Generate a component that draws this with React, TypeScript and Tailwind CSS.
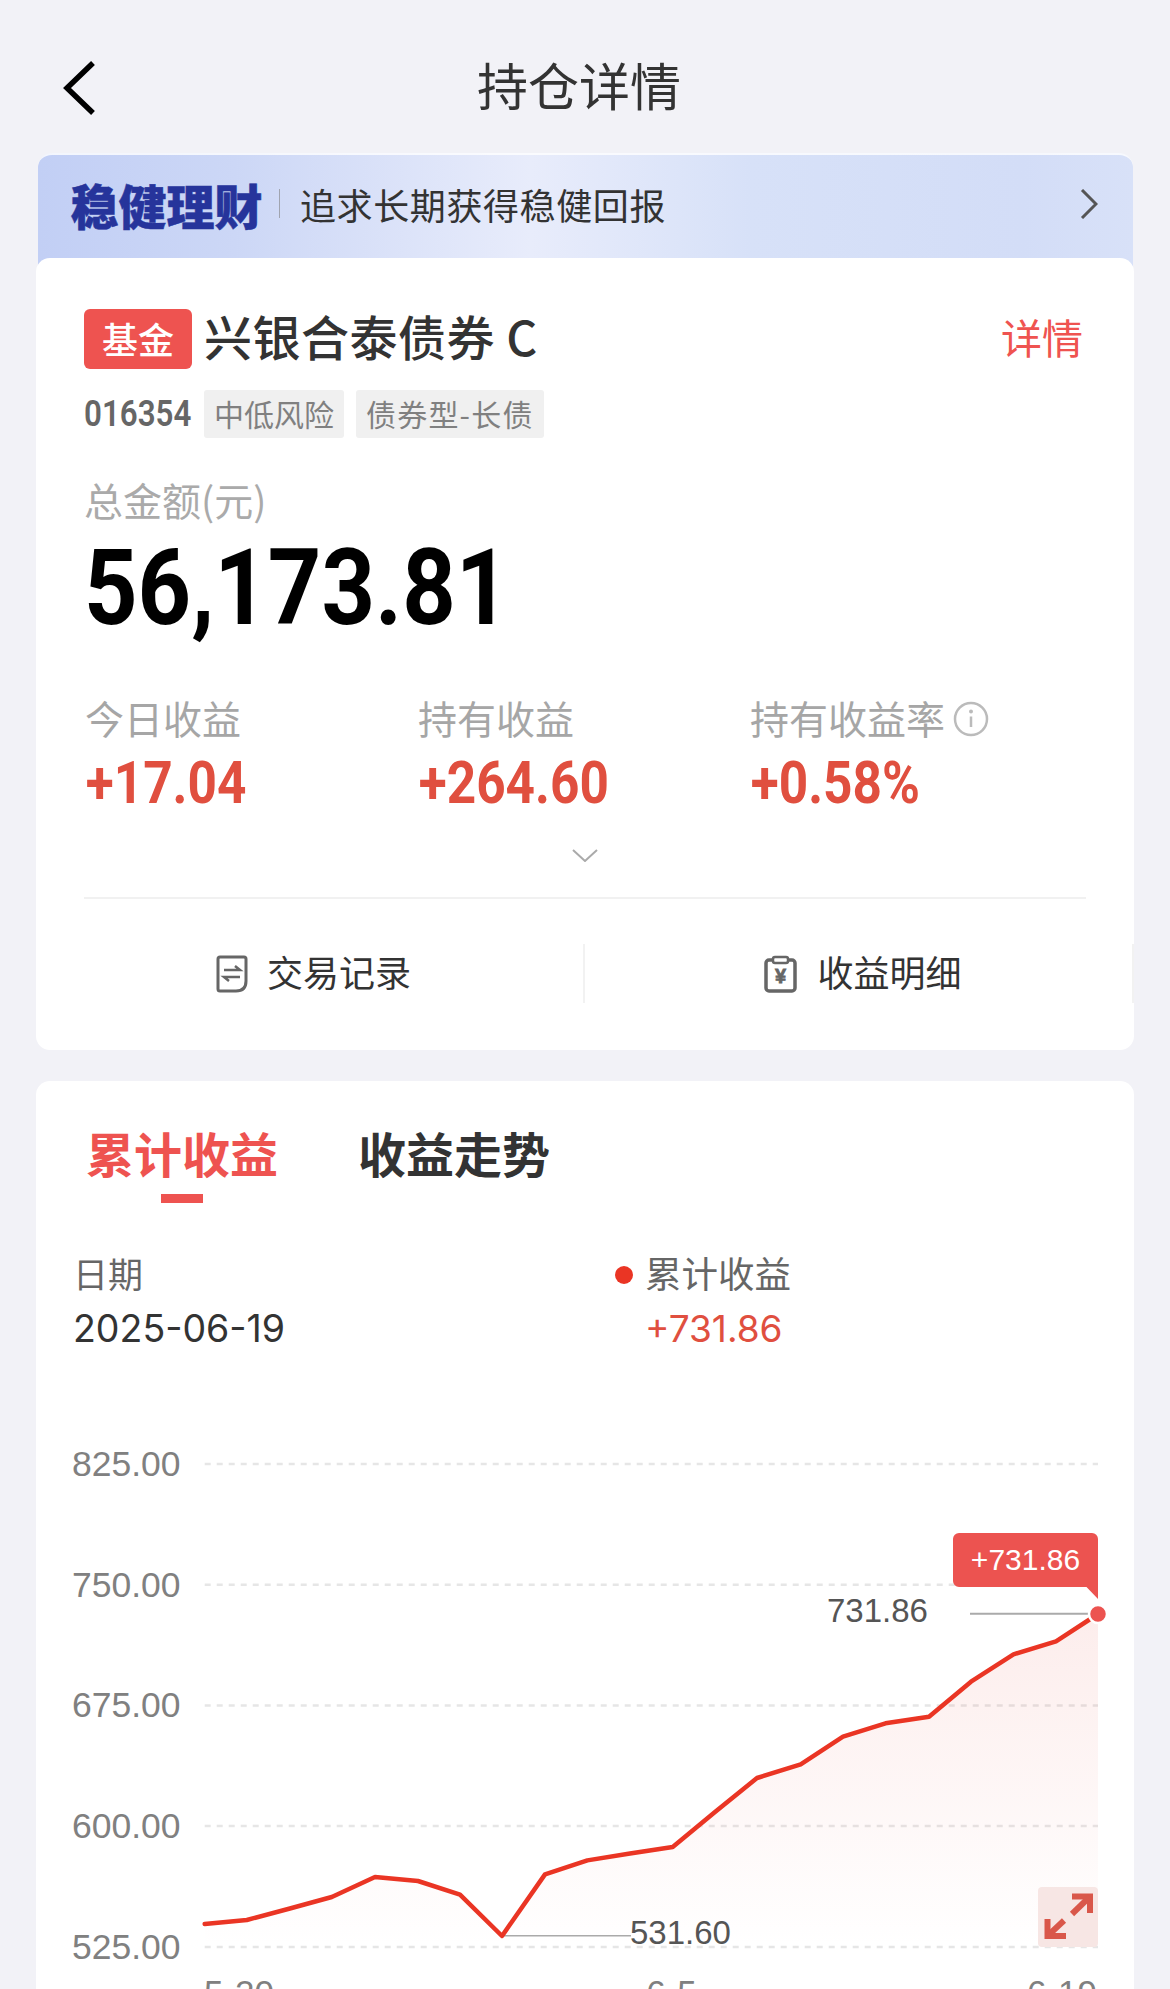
import React from 'react';

const CJK = "font-['Noto_Sans_CJK_SC','Noto_Sans',sans-serif]";

const points: [number, number][] = [
  [204.7, 1924], [246.8, 1920], [289.9, 1908.5], [331.8, 1897], [375, 1877], [418, 1881], [460, 1894.6],
  [502, 1936], [545, 1874.4], [587.4, 1860.4], [630, 1853.5], [672.7, 1847], [715, 1812], [757, 1778],
  [800.7, 1764.3], [843, 1736.7], [885.5, 1723.3], [929, 1716.7], [971, 1681.7], [1013.5, 1654.3],
  [1056, 1641.3], [1098, 1614],
];

const grid = [
  { label: '825.00', y: 1464 },
  { label: '750.00', y: 1584.7 },
  { label: '675.00', y: 1705.4 },
  { label: '600.00', y: 1826 },
  { label: '525.00', y: 1947 },
];

const linePath = points.map(([x, y]) => `${x},${y}`).join(' ');
const areaPath = `${linePath} 1098,1947 204.7,1947`;

const stats = [
  { label: '今日收益', value: '+17.04' },
  { label: '持有收益', value: '+264.60' },
  { label: '持有收益率', value: '+0.58%', info: true },
];

const Chart: React.FC = () => (
  <svg viewBox="36 1354 1098 635" className="block w-[1098px] h-[635px]" fontFamily="'Liberation Sans', Arial, sans-serif">
    <defs>
      <linearGradient id="area" gradientUnits="userSpaceOnUse" x1="0" y1="1614" x2="0" y2="1947">
        <stop offset="0" stopColor="#e85a50" stopOpacity="0.11" />
        <stop offset="1" stopColor="#e85a50" stopOpacity="0" />
      </linearGradient>
    </defs>
    {grid.map((g) => (
      <g key={g.label}>
        <line x1="204.7" x2="1098" y1={g.y} y2={g.y} stroke="#e6e6e6" strokeWidth="2.5" strokeDasharray="6 6" />
        <text x="72" y={g.y + 12} fontSize="35.5" fill="#808080">{g.label}</text>
      </g>
    ))}
    <polygon points={areaPath} fill="url(#area)" />
    <line x1="502" x2="631" y1="1935.7" y2="1935.7" stroke="#aaaaaa" strokeWidth="1.5" />
    <line x1="970" x2="1091" y1="1613.7" y2="1613.7" stroke="#aaaaaa" strokeWidth="2" />
    <polyline points={linePath} fill="none" stroke="#ea3524" strokeWidth="4.5" strokeLinejoin="round" strokeLinecap="round" />
    <text x="827" y="1622" fontSize="33" fill="#555555">731.86</text>
    <text x="630" y="1944" fontSize="33" fill="#555555">531.60</text>
    <path d="M959 1533H1092a6 6 0 0 1 6 6V1599L1086.5 1587H959a6 6 0 0 1-6-6V1539a6 6 0 0 1 6-6Z" fill="#ec5350" />
    <text x="1025.5" y="1570" fontSize="30" fill="#ffffff" textAnchor="middle">+731.86</text>
    <circle cx="1098" cy="1614" r="9" fill="#ec5350" stroke="#ffffff" strokeWidth="2.5" />
    <rect x="1038" y="1887" width="60" height="60" rx="4" fill="#f7e6e4" />
    <g fill="none" stroke="#d9574a" strokeWidth="6">
      <path d="M1072 1896.5H1090V1913" />
      <path d="M1090 1896.5L1072 1914" />
      <path d="M1047.5 1919V1936H1066" />
      <path d="M1047.5 1936L1064 1920.5" />
    </g>
    <text x="204" y="2005" fontSize="35" fill="#808080">5-20</text>
    <text x="671.5" y="2005" fontSize="35" fill="#808080" textAnchor="middle">6-5</text>
    <text x="1097" y="2005" fontSize="35" fill="#808080" textAnchor="end">6-19</text>
  </svg>
);

export default function App() {
  return (
    <div className={`w-[1170px] h-[1989px] overflow-hidden bg-[#f2f2f7] ${CJK}`}>
      <header className="flex items-center h-[80px] mt-[48px] mb-[25px] pl-[63px]">
        <svg viewBox="0 0 32 54" className="w-[32px] h-[54px]">
          <path d="M30 2L4 27L30 52" fill="none" stroke="#000" strokeWidth="5.5" />
        </svg>
        <h1 className="ml-[382px] h-[60px] pb-[7px] flex items-center text-[51px] font-normal text-[#333] whitespace-nowrap">持仓详情</h1>
      </header>

      <div className="mx-[36px]">
        <div className="mx-[1.5px] h-[119px] pb-[20px] flex items-center rounded-t-[14px] border-t-[2px] border-white/80 bg-[linear-gradient(90deg,#c2cff5_0%,#ccd7f6_18%,#e8ecfb_45%,#d7e1f8_65%,#d3ddf7_90%,#d8e1f8_100%)] pl-[33px] pr-[35px]">
          <span className="text-[48px] leading-[56px] font-black text-[#26349b] [-webkit-text-stroke:0.5px_#26349b] whitespace-nowrap">稳健理财</span>
          <span className="ml-[16px] w-[1.5px] h-[29px] bg-[#a0a4b0]" />
          <span className="ml-[20px] text-[36px] leading-[48px] tracking-[0.6px] text-[#333] whitespace-nowrap">追求长期获得稳健回报</span>
          <svg viewBox="0 0 18 30" className="ml-auto w-[18px] h-[30px]">
            <path d="M2 1L16 15L2 29" fill="none" stroke="#555" strokeWidth="3" />
          </svg>
        </div>

        <section className="relative -mt-[14px] bg-white rounded-[14px] px-[48px] pt-[51px] pb-[49px]">
          <div className="flex items-center">
            <span className="w-[108px] h-[60px] pb-[2px] flex items-center justify-center rounded-[6px] bg-[#ee5350] text-white text-[36px] font-medium">基金</span>
            <span className="ml-[12px] h-[60px] pb-[8px] flex items-center text-[48px] font-medium tracking-[0.5px] text-[#333] whitespace-nowrap">兴银合泰债券 C</span>
            <span className="ml-auto mr-[3px] h-[60px] pb-[5px] flex items-center text-[41px] text-[#ef5350]">详情</span>
          </div>

          <div className="flex items-center mt-[21px] h-[48px]">
            <span className="w-[106px] whitespace-nowrap origin-left scale-x-[0.87] font-['Roboto',sans-serif] font-semibold text-[36px] text-[#666]">016354</span>
            <span className="ml-[14px] h-[48px] px-[10px] pb-[2px] flex items-center rounded-[3px] bg-[#f0f0f0] text-[30px] text-[#808080]">中低风险</span>
            <span className="ml-[12px] h-[48px] px-[10px] pb-[2px] flex items-center rounded-[3px] bg-[#f0f0f0] text-[30px] tracking-[1.2px] text-[#808080] whitespace-nowrap">债券型-长债</span>
          </div>

          <div className="mt-[44px] h-[40px] pb-[6px] flex items-center text-[39px] text-[#aaa]">总金额(元)</div>
          <div className="mt-[17px] h-[100px] flex items-center whitespace-nowrap origin-left scale-x-[0.89] font-['Roboto',sans-serif] font-bold text-[105px] text-black">56,173.81</div>

          <div className="grid grid-cols-[333px_332px_1fr] mt-[59px]">
            {stats.map((s) => (
              <div key={s.label}>
                <div className="flex items-center h-[44px] pb-[6px] pl-[1px] text-[39px] text-[#a6a6a6] whitespace-nowrap">
                  {s.label}
                  {s.info && (
                    <svg viewBox="0 0 36 36" className="ml-[8px] mt-[4px] w-[36px] h-[36px]">
                      <circle cx="18" cy="18" r="16" fill="none" stroke="#bbb" strokeWidth="2.5" />
                      <circle cx="18" cy="10.5" r="2" fill="#bbb" />
                      <path d="M18 15.5V26" stroke="#bbb" strokeWidth="2.5" />
                    </svg>
                  )}
                </div>
                <div className="mt-[11px] h-[60px] pl-[2px] flex items-center whitespace-nowrap origin-left scale-x-[0.87] font-['Roboto',sans-serif] font-bold text-[59px] text-[#e04f3f]">{s.value}</div>
              </div>
            ))}
          </div>

          <div className="mt-[36px] h-[13px] flex justify-center">
            <svg viewBox="0 0 26 13" className="w-[26px] h-[13px]">
              <path d="M1 1L13 12L25 1" fill="none" stroke="#aaa" strokeWidth="2" />
            </svg>
          </div>
          <div className="mt-[35px] h-[2px] bg-[#f1f1f1]" />

          <div className="-mx-[48px] mt-[45px] h-[57px] grid grid-cols-2">
            <div className="flex items-center justify-center gap-[19px] pl-[8px] border-r-[2px] border-[#f2f2f2]">
              <svg viewBox="0 0 32 38" className="w-[32px] h-[38px]">
                <path d="M4 2H28a2 2 0 0 1 2 2V26Q30 36 20 36H4a2 2 0 0 1-2-2V4a2 2 0 0 1 2-2Z" fill="none" stroke="#666" strokeWidth="3" />
                <path d="M8 15H24L19 11M24 22H8L13 26" fill="none" stroke="#666" strokeWidth="2.5" />
              </svg>
              <span className="pb-[5px] text-[36px] text-[#333] whitespace-nowrap">交易记录</span>
            </div>
            <div className="flex items-center justify-center gap-[20px] pl-[9px] border-r-[2px] border-[#f2f2f2]">
              <svg viewBox="0 0 33 38" className="w-[33px] h-[38px]">
                <rect x="2" y="5" width="29" height="31" rx="3" fill="none" stroke="#666" strokeWidth="3.5" />
                <rect x="9" y="2" width="15" height="6" rx="2" fill="#fff" stroke="#666" strokeWidth="2.5" />
                <text x="16.5" y="28" fontSize="20" fontWeight="700" stroke="#666" strokeWidth="0.8" fill="#666" textAnchor="middle" fontFamily="'Liberation Sans', sans-serif">¥</text>
              </svg>
              <span className="pb-[5px] text-[36px] text-[#333] whitespace-nowrap">收益明细</span>
            </div>
          </div>
        </section>

        <section className="mt-[31px] bg-white rounded-t-[14px] h-[908px]">
          <div className="flex gap-[80px] pl-[50px] pt-[44px]">
            <div className="w-[192px]">
              <div className="h-[60px] pb-[7px] flex items-center text-[48px] font-bold text-[#ee5350] whitespace-nowrap">累计收益</div>
              <div className="mx-auto mt-[9px] w-[42px] h-[9px] bg-[#ee5350]" />
            </div>
            <div className="h-[60px] pb-[7px] flex items-center text-[48px] font-bold text-[#333] whitespace-nowrap">收益走势</div>
          </div>

          <div className="flex mt-[50px] pl-[37px]">
            <div className="w-[542px]">
              <div className="h-[44px] pb-[3px] flex items-center text-[35px] text-[#666]">日期</div>
              <div className="mt-[7px] h-[50px] flex items-center font-['Inter',sans-serif] text-[37.5px] text-[#333]">2025-06-19</div>
            </div>
            <div>
              <div className="h-[44px] flex items-center gap-[12px] text-[36.5px] text-[#666] whitespace-nowrap">
                <span className="w-[18px] h-[18px] rounded-full bg-[#ea3524]" />
                <span className="pb-[3px]">累计收益</span>
              </div>
              <div className="mt-[7px] pl-[30px] h-[50px] flex items-center font-['Inter',sans-serif] text-[37px] text-[#e04f3f]">+731.86</div>
            </div>
          </div>

          <Chart />
        </section>
      </div>
    </div>
  );
}
